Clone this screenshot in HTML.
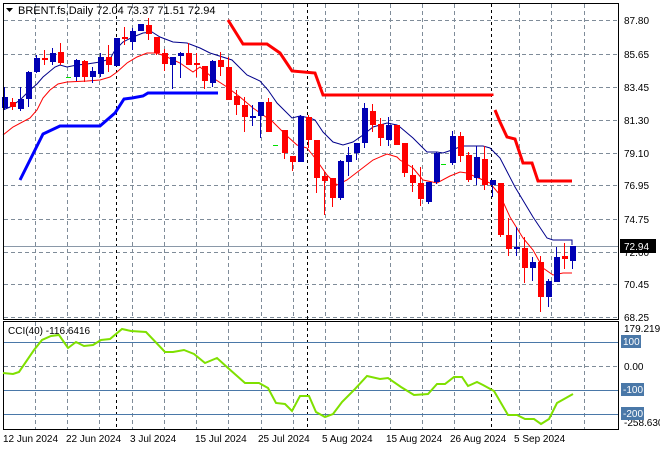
<!DOCTYPE html>
<html><head><meta charset="utf-8"><style>
html,body{margin:0;padding:0;background:#fff;}
svg{display:block;font-family:"Liberation Sans",sans-serif;}
</style></head><body>
<svg width="660" height="450" viewBox="0 0 660 450" xmlns="http://www.w3.org/2000/svg">
<rect width="660" height="450" fill="#fff"/>
<!-- grid main -->
<g stroke="#7f8c99" stroke-width="1" stroke-dasharray="4,3" fill="none">
<path d="M4 20.5H618M4 54.5H618M4 87.5H618M4 120.5H618M4 153.5H618M4 185.5H618M4 219.5H618M4 252.5H618M4 284.5H618M4 317.5H618"/>
<path d="M35.5 4V319M67.5 4V319M99.5 4V319M132.5 4V319M164.5 4V319M196.5 4V319M228.5 4V319M261.5 4V319M293.5 4V319M325.5 4V319M358.5 4V319M390.5 4V319M422.5 4V319M454.5 4V319M519.5 4V319M551.5 4V319M584.5 4V319"/>
<path d="M35.5 322V429M67.5 322V429M99.5 322V429M132.5 322V429M164.5 322V429M196.5 322V429M228.5 322V429M261.5 322V429M293.5 322V429M325.5 322V429M358.5 322V429M390.5 322V429M422.5 322V429M454.5 322V429M519.5 322V429M551.5 322V429M584.5 322V429"/>
<path d="M4 366.5H618"/>
</g>
<g stroke="#000" stroke-width="1" stroke-dasharray="3,3">
<path d="M116.5 4V319M307.5 4V319M491.5 4V319M116.5 322V429M307.5 322V429M491.5 322V429"/>
</g>
<line x1="4" y1="246.5" x2="618" y2="246.5" stroke="#8a98a8"/>
<!-- thick bands -->
<polyline fill="none" stroke="#0000ff" stroke-width="3" points="20,180 30,160 43,134 60,126 100,126 115,113 124,99 132,98 143,96 148,93 218,93"/>
<polyline fill="none" stroke="#ff0000" stroke-width="3" points="228,20 243,44 267,44 280,53 292,71 315,73 323,95 492,95 492,96"/>
<polyline fill="none" stroke="#ff0000" stroke-width="3" points="495,110 500,122 507,137 515,139 523,163 532,163 538,181 572,181"/>
<!-- MA lines -->
<polyline fill="none" stroke="#00008b" stroke-width="1" points="3,110 10,107 20,100 30,90 37,84 43,77 55,67 60,65 67,67 77,65 87,64 100,62 110,59 115,50 123,42 133,37 143,33 152,32 160,37 173,42 187,43 200,48 210,53 232,60 247,75 260,81 268,90 277,103 292,118 300,116 310,118 315,120 323,132 333,142 343,145 353,142 363,135 373,127 387,123 397,125 400,127 413,138 427,152 437,152 443,153 452,150 462,146 483,146 490,148 500,158 515,187 533,217 547,238 553,240 572,240 572,245"/>
<polyline fill="none" stroke="#ff0000" stroke-width="1" points="3,135 13,127 30,118 37,110 43,98 50,90 58,84 67,82 87,81 100,80 110,77 117,72 127,63 137,57 147,53 157,53 167,57 180,63 193,72 200,67 213,78 227,87 240,97 253,108 273,122 287,136 297,145 307,148 315,158 327,175 337,185 347,180 360,170 373,160 387,154 397,157 400,160 413,168 423,180 437,183 450,176 460,172 467,173 483,180 490,183 500,195 510,217 523,238 533,250 543,268 553,275 563,273 572,273"/>
<!-- blue candles -->
<g stroke="#0000b4" fill="#0000b4" stroke-width="1">
<path d="M4.5 87V110M20.5 87V111M28.5 71V107M36.5 55V73M52.5 48V65M76.5 59V81M92.5 67V83M100.5 53V77M116.5 38V66M132.5 28V50M140.5 24V31M172.5 57V89M180.5 52V78M212.5 60V87M252.5 105V126M260.5 102V138M300.5 115V162M340.5 160V200M348.5 147V176M356.5 143V160M364.5 103V148M388.5 117V146M428.5 182V204M436.5 152V184M452.5 131V165M476.5 146V185M492.5 180V197M516.5 227V256M532.5 257V281M548.5 279V307M556.5 247V282M572.5 246V269"/>
<g stroke="none">
<rect x="2" y="97" width="6" height="11"/><rect x="18" y="99" width="6" height="10"/><rect x="26" y="72" width="6" height="27"/><rect x="34" y="58" width="6" height="14"/><rect x="50" y="53" width="6" height="9"/><rect x="74" y="60" width="6" height="17"/><rect x="90" y="71" width="6" height="6"/><rect x="98" y="57" width="6" height="17"/><rect x="114" y="38" width="6" height="28"/><rect x="130" y="31" width="6" height="11"/><rect x="138" y="24" width="6" height="7"/><rect x="170" y="57" width="6" height="8"/><rect x="178" y="53" width="6" height="3"/><rect x="210" y="61" width="6" height="22"/><rect x="250" y="116" width="6" height="2"/><rect x="258" y="102" width="6" height="14"/><rect x="298" y="116" width="6" height="46"/><rect x="338" y="161" width="6" height="37"/><rect x="346" y="155" width="6" height="7"/><rect x="354" y="143" width="6" height="10"/><rect x="362" y="108" width="6" height="35"/><rect x="386" y="125" width="6" height="15"/><rect x="426" y="182" width="6" height="20"/><rect x="434" y="153" width="6" height="29"/><rect x="450" y="136" width="6" height="27"/><rect x="474" y="157" width="6" height="21"/><rect x="490" y="180" width="6" height="5"/><rect x="514" y="247" width="6" height="2"/><rect x="530" y="262" width="6" height="6"/><rect x="546" y="281" width="6" height="16"/><rect x="554" y="257" width="6" height="25"/><rect x="570" y="246" width="6" height="15"/>
</g></g>
<!-- red candles -->
<g stroke="#ff0000" fill="#ff0000" stroke-width="1">
<path d="M12.5 98V110M44.5 50V65M60.5 43V65M84.5 60V82M108.5 45V72M124.5 27V45M148.5 18V40M156.5 37V55M164.5 49V71M188.5 43V65M196.5 53V77M204.5 66V89M220.5 52V76M228.5 57V100M236.5 90V115M244.5 97V132M268.5 98V132M284.5 130V159M292.5 156V171M308.5 115V148M316.5 140V193M324.5 172V215M332.5 178V207M372.5 104V132M380.5 118V146M396.5 125V145M404.5 143V177M412.5 165V192M420.5 167V206M460.5 132V162M468.5 152V182M484.5 146V190M500.5 183V237M508.5 218V256M524.5 237V283M540.5 256V312M564.5 243V269"/>
<g stroke="none">
<rect x="10" y="102" width="6" height="5"/><rect x="42" y="58" width="6" height="2"/><rect x="58" y="52" width="6" height="11"/><rect x="82" y="61" width="6" height="16"/><rect x="106" y="57" width="6" height="8"/><rect x="122" y="37" width="6" height="2"/><rect x="146" y="25" width="6" height="9"/><rect x="154" y="37" width="6" height="16"/><rect x="162" y="53" width="6" height="11"/><rect x="186" y="53" width="6" height="12"/><rect x="194" y="63" width="6" height="2"/><rect x="202" y="66" width="6" height="15"/><rect x="218" y="60" width="6" height="7"/><rect x="226" y="67" width="6" height="33"/><rect x="234" y="96" width="6" height="9"/><rect x="242" y="105" width="6" height="12"/><rect x="266" y="102" width="6" height="30"/><rect x="282" y="130" width="6" height="23"/><rect x="290" y="156" width="6" height="6"/><rect x="306" y="117" width="6" height="23"/><rect x="314" y="140" width="6" height="38"/><rect x="322" y="176" width="6" height="5"/><rect x="330" y="178" width="6" height="20"/><rect x="370" y="111" width="6" height="14"/><rect x="378" y="124" width="6" height="14"/><rect x="394" y="125" width="6" height="20"/><rect x="402" y="143" width="6" height="30"/><rect x="410" y="175" width="6" height="8"/><rect x="418" y="183" width="6" height="16"/><rect x="458" y="136" width="6" height="20"/><rect x="466" y="155" width="6" height="25"/><rect x="482" y="159" width="6" height="26"/><rect x="498" y="183" width="6" height="52"/><rect x="506" y="235" width="6" height="14"/><rect x="522" y="248" width="6" height="20"/><rect x="538" y="262" width="6" height="35"/><rect x="562" y="256" width="6" height="3"/>
</g></g>
<path d="M66 77.5H71M273 145.5H278M441 164.5H446" stroke="#00e000" stroke-width="1"/>
<!-- frames -->
<rect x="3.5" y="3.5" width="615" height="316" fill="none" stroke="#000"/>
<rect x="3.5" y="321.5" width="615" height="108" fill="none" stroke="#000"/>
<!-- header -->
<path d="M6 8H13L9.5 12Z" fill="#000"/>
<text x="18" y="14" font-size="11" fill="#000">BRENT.fs,Daily  72.04 73.37 71.51 72.94</text>
<!-- price axis -->
<g font-size="10" fill="#000">
<text x="624" y="24">87.80</text><text x="624" y="58">85.65</text><text x="624" y="91">83.45</text><text x="624" y="124">81.30</text><text x="624" y="157">79.10</text><text x="624" y="189">76.95</text><text x="624" y="223">74.75</text><text x="624" y="256">72.60</text><text x="624" y="288">70.45</text><text x="624" y="321">68.25</text>
</g>
<rect x="620" y="239" width="36" height="14" fill="#000"/>
<text x="624" y="250" font-size="10" fill="#fff">72.94</text>
<!-- CCI -->
<g stroke="#4a78a8" stroke-width="1">
<path d="M4 342.5H618M4 390.5H618M4 414.5H618"/>
</g>
<polyline fill="none" stroke="#7fe000" stroke-width="2" points="3,373 13,374 19,372 34,350 42,340 51,336 59,335 68,348 76,342 84,346 93,345 101,340 110,339 122,329 131,331 146,332 165,352 173,352 184,350 194,354 205,363 217,358 228,368 245,383 259,383 268,388 276,403 285,404 292,411 300,396 309,396 316,412 325,417 333,414 342,402 354,390 367,376 380,379 388,378 401,387 414,395 428,394 437,384 445,384 454,377 462,377 468,386 477,382 483,385 494,391 508,415 517,415 525,419 534,419 541,424 549,419 557,403 573,394"/>
<text x="8" y="334" font-size="10" fill="#000">CCI(40) -116.6416</text>
<g font-size="10" fill="#000">
<text x="624" y="332">179.2199</text><text x="624" y="370">0.00</text><text x="624" y="426">-258.630</text>
</g>
<rect x="621" y="335" width="20" height="13" fill="#4a78a8"/><text x="623" y="345" font-size="10" fill="#fff">100</text>
<rect x="621" y="383" width="23" height="13" fill="#4a78a8"/><text x="623" y="393" font-size="10" fill="#fff">-100</text>
<rect x="621" y="407" width="23" height="13" fill="#4a78a8"/><text x="623" y="417" font-size="10" fill="#fff">-200</text>
<!-- dates -->
<g font-size="10" fill="#000">
<text x="3" y="442">12 Jun 2024</text><text x="66" y="442">22 Jun 2024</text><text x="130" y="442">3 Jul 2024</text><text x="195" y="442">15 Jul 2024</text><text x="258" y="442">25 Jul 2024</text><text x="322" y="442">5 Aug 2024</text><text x="386" y="442">15 Aug 2024</text><text x="450" y="442">26 Aug 2024</text><text x="514" y="442">5 Sep 2024</text>
</g>
</svg>
</body></html>
